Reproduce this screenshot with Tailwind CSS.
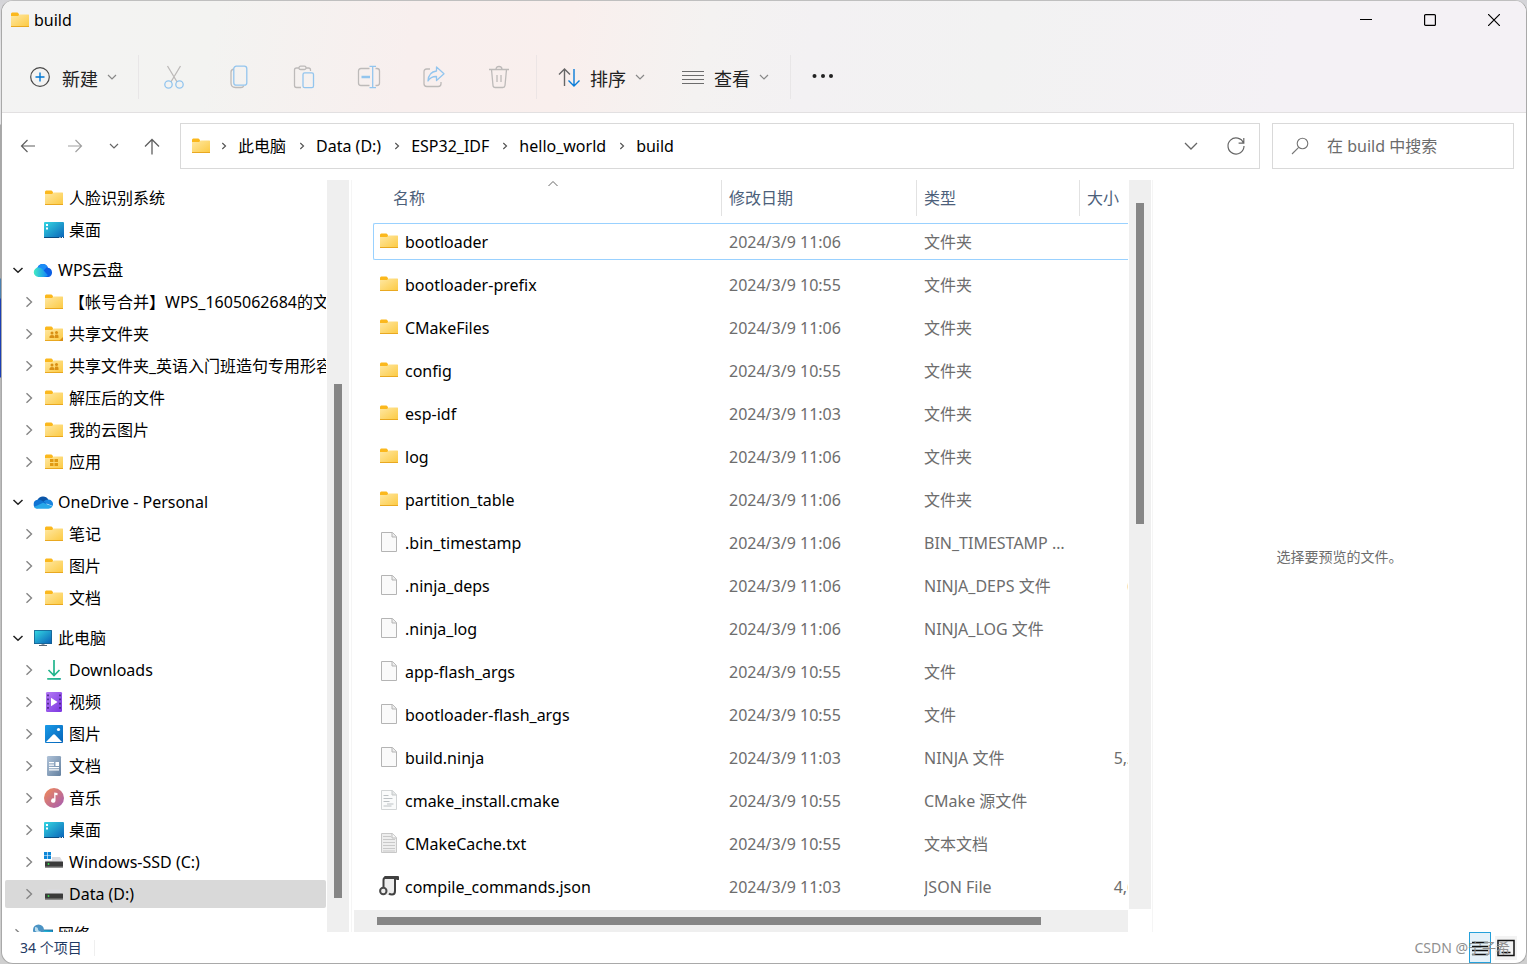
<!DOCTYPE html>
<html lang="zh-CN">
<head>
<meta charset="utf-8">
<title>build</title>
<script src="https://cdn.jsdelivr.net/npm/@tailwindcss/browser@4"></script>
</head>
<body class="h-screen overflow-hidden font-['Noto_Sans','Noto_Sans_CJK_SC',sans-serif] text-base leading-6 text-black">
<svg class="absolute size-0" aria-hidden="true" xmlns="http://www.w3.org/2000/svg">
  <defs>
    <linearGradient id="gFolder" x1="0" y1="0" x2="1" y2="1"><stop offset="0" stop-color="#ffe8a3"/><stop offset="1" stop-color="#fcca43"/></linearGradient>
    <linearGradient id="gDesk" x1="0" y1="0" x2="1" y2="1"><stop offset="0" stop-color="#33d6e2"/><stop offset="1" stop-color="#0a62b8"/></linearGradient>
    <linearGradient id="gWps" x1="0" y1="0" x2="1" y2="0"><stop offset="0" stop-color="#42ecc4"/><stop offset="1" stop-color="#1283f8"/></linearGradient>
    <linearGradient id="gDown" x1="0" y1="0" x2="1" y2="1"><stop offset="0" stop-color="#35c78c"/><stop offset="1" stop-color="#0f9c94"/></linearGradient>
    <linearGradient id="gVid" x1="0" y1="0" x2="1" y2="1"><stop offset="0" stop-color="#b57bf5"/><stop offset="1" stop-color="#7a35e0"/></linearGradient>
    <linearGradient id="gPic" x1="0" y1="0" x2="1" y2="1"><stop offset="0" stop-color="#1a9be8"/><stop offset="1" stop-color="#0563b8"/></linearGradient>
    <linearGradient id="gDoc" x1="0" y1="0" x2="1" y2="1"><stop offset="0" stop-color="#b0c3d9"/><stop offset="1" stop-color="#63809f"/></linearGradient>
    <linearGradient id="gMus" x1="0" y1="0" x2="1" y2="1"><stop offset="0" stop-color="#f38b55"/><stop offset="1" stop-color="#a35bb5"/></linearGradient>
  </defs>
  <symbol id="folder" viewBox="0 0 20 20"><path d="M1 4q0-1.500 1.200-1.500h5q.8 0 1.200.8l.6 1.200v3H1z" fill="#fbb81d"/><path d="M1 6h7l1.500-1.500H18.500q.5 0 .5.500v11.500H1z" fill="url(#gFolder)"/><path d="M1 16h18v1H1z" fill="#e9a820"/></symbol>
  <symbol id="shared" viewBox="0 0 20 20"><use href="#folder"/><g fill="#d98f14"><circle cx="8" cy="9" r="1.500"/><circle cx="12.500" cy="8.500" r="1.500"/><path d="M5.500 14v-1.500q0-1.500 2.500-1.500t2.500 1.500V14zM11 14v-3.200q3.500-.8 3.500 1.200v2z"/></g></symbol>
  <symbol id="sharedtag" viewBox="0 0 20 20"><use href="#shared"/><path d="M19 13v4h-4z" fill="#d98f14"/></symbol>
  <symbol id="apps" viewBox="0 0 20 20"><use href="#folder"/><path d="M6 7h3.500v3H6zM10.500 7h3.500v3h-3.500zM6 11h3.500v3H6zM10.500 11h3.500v3h-3.500z" fill="#e09a12"/></symbol>
  <symbol id="desktop" viewBox="0 0 20 20"><rect y="2" width="20" height="16" rx="1" fill="url(#gDesk)"/><path d="M2 4h2v2H2zM2 7.500h2v2H2z" fill="#fff"/><path d="M0 17h20v.500q0 .5-1 .5H1q-1 0-1-.5z" fill="#0a4a80"/><path d="M15.500 17h1v1h-1zM18 17h1v1h-1z" fill="#fff"/></symbol>
  <symbol id="wps" viewBox="0 0 20 20"><path d="M4.500 7.500A5.600 5.600 0 0 1 15 7.800a4.700 4.700 0 0 1 .5 9.200H9z" fill="#0b5fe4"/><path d="M4.500 7.800A5.600 5.600 0 0 1 14.500 6.500L8 13z" fill="#1a8df7"/><path d="M5.500 7.500q2.500 0 4 1.800l5.500 6q-1.500 1.700-4 1.700H5.500a4.750 4.750 0 0 1 0-9.500z" fill="url(#gWps)"/></symbol>
  <symbol id="onedrive" viewBox="0 0 20 20"><path d="M4.500 8A6 6 0 0 1 15.300 7.600L12 12z" fill="#0a55a8"/><path d="M4.500 7.700q2-.4 4 .9l6 3.400L4 16.500a4.500 4.500 0 0 1 .5-8.800z" fill="#1074d4"/><path d="M15.500 7.500a4.500 4.500 0 0 1 4 6.500l-6-2.500-3-2q2-2 5-2z" fill="#1a86e0"/><path d="M1 15l9-4.200 9.500 3.500q-1 2.400-4 2.400H4.500Q2 16.700 1 15z" fill="#28a8ea"/></symbol>
  <symbol id="pc" viewBox="0 0 20 20"><path d="M8.500 15h3v2h-3z" fill="#8a97a5"/><path d="M6 17h8v1H6z" fill="#566575"/><rect x="1" y="2" width="18" height="14" rx=".6" fill="#17608f"/><rect x="1.800" y="2.800" width="16.400" height="12.400" fill="url(#gDesk)"/></symbol>
  <symbol id="download" viewBox="0 0 20 20"><path d="M10 0v15M4.500 10l5.500 5.500 5.500-5.500" fill="none" stroke="#22b58d" stroke-width="1.700"/><rect x="3" y="18" width="14" height="1.800" rx=".8" fill="url(#gDown)"/></symbol>
  <symbol id="video" viewBox="0 0 20 20"><rect x="2" width="16" height="20" rx="1.200" fill="url(#gVid)"/><path d="M3.200 2.500h1.600v1.800H3.200zM3.200 6.500h1.600v1.800H3.200zM3.200 10.700h1.600v1.800H3.200zM3.200 15h1.600v1.800H3.200zM15.200 2.500h1.600v1.800h-1.600zM15.200 6.500h1.600v1.800h-1.600zM15.200 10.700h1.600v1.800h-1.600zM15.200 15h1.600v1.800h-1.600z" fill="#43207d"/><path d="M7 5.800l6.500 4.200L7 14.200z" fill="#fff"/></symbol>
  <symbol id="picture" viewBox="0 0 20 20"><rect x="1" y="1" width="18" height="18" rx="1" fill="url(#gPic)"/><circle cx="14.500" cy="5.500" r="1.600" fill="#fff"/><path d="M2 18l7-7.300q1-1 2 0l7 7.300z" fill="#fff"/></symbol>
  <symbol id="docs" viewBox="0 0 20 20"><rect x="3" width="14" height="20" rx="1.200" fill="url(#gDoc)"/><path d="M5 6h5v1.200H5zM5 8.600h5v1.200H5zM11.500 6H15v4h-3.500zM5 11h10v1.200H5zM5 13.300h10v1.200H5z" fill="#fff"/></symbol>
  <symbol id="music" viewBox="0 0 20 20"><circle cx="10" cy="10" r="10" fill="url(#gMus)"/><path d="M10.200 4.500l3.300.5v2.200l-2-.3v5.600a2.200 2.200 0 1 1-1.300-2z" fill="#fff"/></symbol>
  <symbol id="drive" viewBox="0 0 20 20"><path d="M4 5.500h12l3 4.500H1z" fill="#dcdce0"/><rect x="1" y="9.500" width="18" height="6" rx=".5" fill="#3b3b3b"/><path d="M1 14.500h18v1H1z" fill="#8a8a8a"/><circle cx="4.500" cy="12" r=".9" fill="#37e04d"/></symbol>
  <symbol id="windrive" viewBox="0 0 20 20"><path d="M8 5h8l3 5H1V8.500h7z" fill="#dcdce0"/><rect x="1" y="9.500" width="18" height="6" rx=".5" fill="#3b3b3b"/><path d="M1 14.500h18v1H1z" fill="#8a8a8a"/><circle cx="4.500" cy="12" r=".9" fill="#37e04d"/><path d="M0 0h3.200v3.200H0zM3.800 0H7v3.200H3.800zM0 3.800h3.200V7H0zM3.800 3.800H7V7H3.800z" fill="#0c86d8"/></symbol>
  <symbol id="network" viewBox="0 0 20 20"><rect x="6" y="6" width="14" height="10" fill="url(#gDesk)" stroke="#17608f" stroke-width=".8"/><circle cx="5.500" cy="6" r="5.500" fill="#4a93c4"/><path d="M2 3q3 0 3 2t3 2.500q-1 3-3 3-1-3-3-3.500z" fill="#b9dcee"/></symbol>
  <symbol id="file" viewBox="0 0 20 20"><path d="M2.500.500h11l4 4v15h-15z" fill="#fafafa" stroke="#b4b4b4"/><path d="M13 .500v4.500h4.500" fill="#ededed" stroke="#b4b4b4"/></symbol>
  <symbol id="cmake" viewBox="0 0 20 20"><path d="M2.500.500h11l4 4v15h-15z" fill="#fafbfb" stroke="#d2d5d6"/><path d="M13 .500v4.500h4.500" fill="#e4e6e6" stroke="#c4c8c9"/><path d="M4.500 5.500h5M4.500 8.500h9M4.500 11.500h6M8 14h6.500M4.500 16h8" stroke="#bcc1c4"/></symbol>
  <symbol id="txt" viewBox="0 0 20 20"><path d="M2.500.500h11l4 4v15h-15z" fill="#eeeeee" stroke="#c8c8c8"/><path d="M13 .500v4.500h4.500" fill="#f8f8f8" stroke="#bdbdbd"/><path d="M4 3.500h8M4 6.500h12M4 9.500h12M4 12.500h12M4 15.500h12M4 18h12" stroke="#c9c9c9"/></symbol>
  <symbol id="json" viewBox="0 0 20 20"><path d="M4 1h13v13q0 5-4 5H6z" fill="#ededed"/><path d="M4.500 12V4q0-2.500 2.500-2.500M16 3v12q0 3.500-3 3.500-2 0-3-1" fill="none" stroke="#404040" stroke-width="2"/><path d="M5.500 0H19q1 0 1 1v2.500q0 .5-.5.500h-2l-.5-1H5z" fill="#404040"/><circle cx="4.300" cy="15" r="3.200" fill="#eee" stroke="#4a4a4a" stroke-width="2"/></symbol>
  <symbol id="chev" viewBox="0 0 10 10"><path d="M1 3l4 4 4-4" fill="none" stroke="currentColor" stroke-width="1.200"/></symbol>
  <symbol id="crumb" viewBox="0 0 8 8"><path d="M2.300 1L5.500 4 2.300 7" fill="none" stroke="currentColor" stroke-width="1.200"/></symbol>
</svg>

<div class="flex h-full flex-col bg-[linear-gradient(to_bottom,#d4d4d8_0px,#e4e4e6_50px,#e4e4e6_124px,#a8a8a8_125px,#a8a8a8_278px,#4a7fb0_279px,#4a7fb0_298px,#1b3fb5_299px,#1b3fb5_377px,#b8b8b8_378px,#cfcfcf_100%)] pl-px">
<main class="flex min-h-0 flex-1 flex-col overflow-hidden rounded-xl border border-[#a9a9a9] border-t-[#bfbfbf] bg-white">

  <header class="border-b border-[#e2e0e1] bg-[linear-gradient(100deg,#f3f3f3_0%,#f3f3f1_14%,#f8efee_27%,#f9efed_37%,#f4f2f1_46%,#f3f1f3_53%,#f2f2f2_65%,#f4f1f5_84%,#f4f1f5_100%)]">
    <div class="flex h-[38px] items-center">
      <svg class="ml-2 size-5"><use href="#folder"/></svg>
      <h1 class="ml-1 flex-1">build</h1>
      <button type="button" aria-label="最小化" class="flex h-full w-16 items-center justify-center"><svg class="size-3" viewBox="0 0 12 12"><path d="M0 5.500h12" stroke="#000"/></svg></button>
      <button type="button" aria-label="最大化" class="flex h-full w-16 items-center justify-center"><svg class="size-3" viewBox="0 0 12 12"><rect x=".6" y=".6" width="10.800" height="10.800" rx="1" fill="none" stroke="#000" stroke-width="1.200"/></svg></button>
      <button type="button" aria-label="关闭" class="flex h-full w-16 items-center justify-center"><svg class="size-3" viewBox="0 0 12 12"><path d="M0 0l12 12M12 0L0 12" stroke="#000" stroke-width="1.200"/></svg></button>
    </div>
    <div class="flex h-[73px] items-center pt-0.5 text-lg text-[#222]">
      <button type="button" class="flex items-center pl-7">
        <svg class="size-5" viewBox="0 0 20 20" fill="none"><circle cx="10" cy="10" r="9.300" stroke="#4a4a4a" stroke-width="1.200"/><path d="M10 5.500v9M5.500 10h9" stroke="#0078d4" stroke-width="1.400"/></svg>
        <span class="ml-3 pt-1">新建</span><svg class="ml-[9px] size-2.5 text-[#888]"><use href="#chev"/></svg>
      </button>
      <div class="ml-[21px] h-11 w-px bg-[#e8e6e7]"></div>
      <button type="button" disabled aria-label="剪切" class="ml-0.5 flex w-[65px] justify-center"><svg class="size-6" viewBox="0 0 24 24" fill="none" stroke-width="1.300"><path d="M5.500 1l9.600 16M18.500 1L8.900 17" stroke="#bdbab9"/><circle cx="6.500" cy="19.500" r="3.700" stroke="#93c5ee"/><circle cx="17.500" cy="19.500" r="3.700" stroke="#93c5ee"/></svg></button>
      <button type="button" disabled aria-label="复制" class="flex w-[65px] justify-center"><svg class="size-6" viewBox="0 0 24 24" fill="none" stroke-width="1.300"><path d="M7 4Q4 4.500 4 7v11q0 4.500 4.500 4.500H14q2 0 2.800-1.800" stroke="#bdbab9"/><rect x="6.800" y="1.200" width="13" height="19" rx="2.500" stroke="#93c5ee"/></svg></button>
      <button type="button" disabled aria-label="粘贴" class="flex w-[65px] justify-center"><svg class="size-6" viewBox="0 0 24 24" fill="none" stroke-width="1.300"><path d="M7 3H4.500Q2.500 3 2.500 5v15.500q0 2 2 2H9M14 3h2.500q2 0 2 2v1" stroke="#bdbab9"/><rect x="7" y="1.200" width="7" height="3.300" rx="1.600" stroke="#bdbab9"/><rect x="11" y="7.800" width="10.500" height="14.800" rx="1.600" stroke="#93c5ee"/></svg></button>
      <button type="button" disabled aria-label="重命名" class="flex w-[65px] justify-center"><svg class="size-6" viewBox="0 0 24 24" fill="none" stroke-width="1.300"><path d="M12.500 3.500H4Q1.500 3.500 1.500 6v12q0 2.500 2.500 2.500h8.500M18.500 3.500h1.500q2.500 0 2.500 2.500v12q0 2.500-2.500 2.500h-1.500" stroke="#bdbab9"/><path d="M12.500 1.300h6.500M12.500 22.700h6.500M15.700 1.300v21.400" stroke="#93c5ee"/><path d="M4.500 12H13" stroke="#93c5ee" stroke-width="2.500"/></svg></button>
      <button type="button" disabled aria-label="共享" class="flex w-[65px] justify-center"><svg class="size-6" viewBox="0 0 24 24" fill="none" stroke-width="1.300"><path d="M8 4H4.800Q2 4 2 6.800v12Q2 21.500 4.800 21.500h11.400q2.800 0 2.800-2.700V17" stroke="#bdbab9"/><path d="M14.500 2l7.500 6.800-7.500 6.700v-4q-5.500-.3-8.500 4.500.5-9 8.500-10z" stroke="#93c5ee" stroke-linejoin="round"/></svg></button>
      <button type="button" disabled aria-label="删除" class="flex w-[65px] justify-center"><svg class="size-6" viewBox="0 0 24 24" fill="none" stroke="#bdbab9" stroke-width="1.300"><path d="M2 4.500h20M4.500 4.500L6 20.500q.2 2 2.200 2h7.600q2 0 2.200-2l1.500-16M9 4.500Q9 1.500 12 1.500t3 3M10 10v7M14 10v7"/></svg></button>
      <div class="ml-[5px] h-11 w-px bg-[#ece5e5]"></div>
      <button type="button" class="ml-5 flex items-center">
        <svg class="size-6" viewBox="0 0 24 24" fill="none" stroke-width="1.400"><path d="M7.500 21V4M2 9.500L7.500 4l5.500 5.500" stroke="#666"/><path d="M17 4v17M11.500 15.500L17 21l5.500-5.500" stroke="#0a7cd8"/></svg>
        <span class="ml-[9px] pt-1">排序</span><svg class="ml-[9px] size-2.5 text-[#888]"><use href="#chev"/></svg>
      </button>
      <button type="button" class="ml-9 flex items-center">
        <svg class="size-6" viewBox="0 0 24 24" fill="none" stroke="#6c6c6c" stroke-width="1.200"><path d="M1 6.500h22M1 10.500h22M1 14.500h22M1 18.500h22"/></svg>
        <span class="ml-[9px] pt-1">查看</span><svg class="ml-[9px] size-2.5 text-[#888]"><use href="#chev"/></svg>
      </button>
      <div class="ml-[21px] h-11 w-px bg-[#e8e6e7]"></div>
      <button type="button" aria-label="更多" class="ml-5 flex pb-0.5"><svg class="h-4 w-6" viewBox="0 0 24 16" fill="#222"><circle cx="3.500" cy="8" r="2"/><circle cx="12" cy="8" r="2"/><circle cx="20" cy="8" r="2"/></svg></button>
    </div>
  </header>

  <nav aria-label="地址" class="flex h-[67px] items-center pr-3 pb-px">
    <button type="button" aria-label="后退" class="ml-4 flex w-5 justify-center"><svg class="size-4" viewBox="0 0 16 16" fill="none" stroke="#5f5f5f" stroke-width="1.200"><path d="M15 8H1.500M7.500 2L1.500 8l6 6"/></svg></button>
    <button type="button" aria-label="前进" class="ml-[27px] flex w-5 justify-center"><svg class="size-4" viewBox="0 0 16 16" fill="none" stroke="#a0a0a0" stroke-width="1.200"><path d="M1 8h13.500M8.500 2l6 6-6 6"/></svg></button>
    <button type="button" aria-label="最近位置" class="ml-[19px] flex w-5 justify-center"><svg class="size-2.5 text-[#666]"><use href="#chev"/></svg></button>
    <button type="button" aria-label="向上" class="ml-[18px] flex w-5 justify-center"><svg class="h-[17px] w-4" viewBox="0 0 16 17" fill="none" stroke="#5f5f5f" stroke-width="1.300"><path d="M8 16.500V1.500M1 8.500l7-7 7 7"/></svg></button>
    <div class="ml-[18px] flex h-[46px] min-w-0 flex-1 items-center border border-[#d9d9d9] pl-2.5">
      <svg class="size-5 shrink-0"><use href="#folder"/></svg>
      <ol id="crumbs" class="flex flex-1 items-center gap-[3px]"></ol>
      <button type="button" aria-label="历史记录" class="flex w-8 justify-center"><svg class="size-4" viewBox="0 0 16 16"><path d="M2 5l6 6 6-6" fill="none" stroke="#666" stroke-width="1.300"/></svg></button>
      <button type="button" aria-label="刷新" class="mr-[11px] ml-[17px] flex w-6 justify-center"><svg class="size-5" viewBox="0 0 20 20" fill="none" stroke="#666" stroke-width="1.200"><path d="M17.500 7.200A8 8 0 1 0 18 10M17.800 2v5.200h-5.200"/></svg></button>
    </div>
    <label class="ml-3 flex h-[46px] w-[242px] items-center border border-[#d9d9d9] pl-[18px]">
      <svg class="size-[18px] shrink-0" viewBox="0 0 18 18" fill="none" stroke="#777" stroke-width="1.100"><circle cx="11.500" cy="6.500" r="5.300"/><path d="M7.700 10.300L1 17"/></svg>
      <input type="search" aria-label="搜索" placeholder="在 build 中搜索" class="ml-[18px] w-full min-w-0 placeholder:text-[#6b6b6b] outline-none">
    </label>
  </nav>

  <div class="flex min-h-0 flex-1">
    <aside class="flex w-[347px] shrink-0">
      <ul id="tree" class="w-[324px] overflow-hidden pt-0.5 pl-[3px]"></ul>
      <div class="ml-px w-[22px] bg-[#efefef] pt-[204px]"><div class="mx-auto h-[514px] w-2 bg-[#868686]"></div></div>
    </aside>

    <section class="ml-0.5 flex min-w-0 flex-1 flex-col border-l border-[#f5f5f5] pl-0.5">
      <div class="flex min-h-0 flex-1">
        <div class="min-w-0 flex-1 overflow-hidden pl-[19px]">
          <table class="w-[810px] table-fixed border-separate border-spacing-0 text-left">
            <colgroup><col class="w-[349px]"><col class="w-[195px]"><col class="w-[163px]"><col></colgroup>
            <thead class="text-[#4c607a]">
              <tr>
                <th scope="col" class="relative pb-1 font-normal"><div class="flex h-9 items-center border-r border-[#e2e2e2] pl-5">名称</div>
                  <svg class="absolute top-0 left-[175px] h-2 w-2.5" viewBox="0 0 10 8"><path d="M.5 6L5 1.500 9.500 6" fill="none" stroke="#666"/></svg></th>
                <th scope="col" class="pb-1 font-normal"><div class="flex h-9 items-center border-r border-[#e2e2e2] pl-[7px]">修改日期</div></th>
                <th scope="col" class="pb-1 font-normal"><div class="flex h-9 items-center border-r border-[#e2e2e2] pl-[7px]">类型</div></th>
                <th scope="col" class="pb-1 font-normal"><div class="flex h-9 items-center pl-[7px]">大小</div></th>
              </tr>
            </thead>
            <tbody id="files" class="text-[#6d6d6d]"></tbody>
          </table>
        </div>
        <div class="ml-px w-[22px] bg-[#efefef] pt-[23px]"><div class="mx-auto h-[321px] w-2 bg-[#868686]"></div></div>
      </div>
      <div class="mt-px mr-[23px] flex h-[22px] items-center bg-[#efefef] pl-[23px]"><div class="h-2 w-[664px] bg-[#868686]"></div></div>
    </section>

    <section class="ml-px flex w-[374px] shrink-0 items-center justify-center border-l border-[#f5f5f5] pt-0.5 text-sm text-[#6d6d6d]">
      <p>选择要预览的文件。</p>
    </section>
  </div>

  <footer class="relative flex h-[31px] items-center pl-[18px] text-sm text-[#1f3a63]">
    <span>34 个项目</span>
    <div class="ml-3 h-4 w-px bg-[#efefef]"></div>
    <div class="ml-auto flex h-full items-center pr-[9px]">
      <button type="button" aria-label="详细信息" class="flex h-full w-[22px] items-center justify-center border border-[#26a0da] bg-[#e5f1f9]"><svg class="size-4" viewBox="0 0 16 16" stroke="#111" stroke-width="1.500"><path d="M0 2.500h16M0 6.500h16M0 10.500h16M0 14.500h16"/></svg></button>
      <button type="button" aria-label="大图标" class="ml-1 flex h-6 w-[22px] items-center justify-center bg-[#f3f3f3]"><svg class="size-[18px]" viewBox="0 0 18 18" fill="none" stroke="#111" stroke-width="1.500"><rect x="1" y="1.500" width="16" height="15"/><path d="M4.500 13.500h9" stroke-width="1.500"/></svg></button>
    </div>
    <span class="pointer-events-none absolute right-4 text-[#909090]">CSDN @宁子希</span>
  </footer>
</main>
</div>

<script>
  const crumbs = ['此电脑', 'Data (D:)', 'ESP32_IDF', 'hello_world', 'build'];
  document.getElementById('crumbs').innerHTML = crumbs.map(c =>
    `<li class="flex items-center"><svg class="mr-2.5 ml-[9px] size-2 text-[#555]"><use href="#crumb"/></svg><a href="#" class="whitespace-nowrap">${c}</a></li>`).join('');

  // [level, icon, label, state]
  const tree = [
    [1, 'folder', '人脸识别系统', 'leaf'], [1, 'desktop', '桌面', 'leaf'],
    [0, 'wps', 'WPS云盘'],
    [1, 'folder', '【帐号合并】WPS_1605062684的文件'], [1, 'sharedtag', '共享文件夹'], [1, 'shared', '共享文件夹_英语入门班造句专用形容词'],
    [1, 'folder', '解压后的文件'], [1, 'folder', '我的云图片'], [1, 'apps', '应用'],
    [0, 'onedrive', 'OneDrive - Personal'],
    [1, 'folder', '笔记'], [1, 'folder', '图片'], [1, 'folder', '文档'],
    [0, 'pc', '此电脑'],
    [1, 'download', 'Downloads'], [1, 'video', '视频'], [1, 'picture', '图片'], [1, 'docs', '文档'],
    [1, 'music', '音乐'], [1, 'desktop', '桌面'], [1, 'windrive', 'Windows-SSD (C:)'], [1, 'drive', 'Data (D:)', 'sel'],
    [0, 'network', '网络', 'closed'],
  ];
  const open = '<svg class="size-3 shrink-0" viewBox="0 0 12 12"><path d="M1.500 4L6 8.300 10.500 4" fill="none" stroke="#222" stroke-width="1.500"/></svg>';
  const closed = '<svg class="size-3 shrink-0" viewBox="0 0 12 12"><path d="M3.500 1.200L8.500 6l-5 4.800" fill="none" stroke="#858585" stroke-width="1.400"/></svg>';
  document.getElementById('tree').innerHTML = tree.map(([lv, icon, label, st]) => {
    const arrow = st === 'leaf' ? '<span class="size-3 shrink-0"></span>' : (lv || st === 'closed') ? closed : open;
    return `<li class="${lv ? 'py-0.5' : 'pt-2.5 pb-0.5'}"><button type="button" class="flex h-7 w-full items-center overflow-hidden whitespace-nowrap rounded-xs ${lv ? 'pl-[18px]' : 'pl-[7px]'} ${st === 'sel' ? 'bg-[#d9d9d9]' : ''}">${arrow}<svg class="ml-[9px] size-5 shrink-0"><use href="#${icon}"/></svg><span class="ml-[5px]">${label}</span></button></li>`;
  }).join('');

  const files = [
    ['folder', 'bootloader', '11:06', '文件夹', ''], ['folder', 'bootloader-prefix', '10:55', '文件夹', ''],
    ['folder', 'CMakeFiles', '11:06', '文件夹', ''], ['folder', 'config', '10:55', '文件夹', ''],
    ['folder', 'esp-idf', '11:03', '文件夹', ''], ['folder', 'log', '11:06', '文件夹', ''],
    ['folder', 'partition_table', '11:06', '文件夹', ''],
    ['file', '.bin_timestamp', '11:06', 'BIN_TIMESTAMP 文件', '0 KB'], ['file', '.ninja_deps', '11:06', 'NINJA_DEPS 文件', '606 KB'],
    ['file', '.ninja_log', '11:06', 'NINJA_LOG 文件', '116 KB'], ['file', 'app-flash_args', '10:55', '文件', '1 KB'],
    ['file', 'bootloader-flash_args', '10:55', '文件', '1 KB'], ['file', 'build.ninja', '11:03', 'NINJA 文件', '5,232 KB'],
    ['cmake', 'cmake_install.cmake', '10:55', 'CMake 源文件', '6 KB'], ['txt', 'CMakeCache.txt', '10:55', '文本文档', '28 KB'],
    ['json', 'compile_commands.json', '11:03', 'JSON File', '4,608 KB'],
  ];
  document.getElementById('files').innerHTML = files.map(([icon, name, time, type, size], i) => {
    const line = i ? 'border-transparent' : 'border-[#99d1ff]';
    return `<tr>
      <td class="py-[3px]"><div class="flex h-[37px] items-center border-y border-l rounded-l-xs pl-[5px] text-black ${line}"><svg class="mb-0.5 size-5 shrink-0"><use href="#${icon}"/></svg><span class="ml-1.5">${name}</span></div></td>
      <td class="py-[3px]"><div class="flex h-[37px] items-center border-y pl-[7px] ${line}">2024/3/9 ${time}</div></td>
      <td class="py-[3px]"><div class="flex h-[37px] items-center border-y pr-1 pl-[7px] ${line}"><span class="truncate">${type}</span></div></td>
      <td class="py-[3px]"><div class="flex h-[37px] items-center justify-end border-y pr-1 ${line}">${size}</div></td></tr>`;
  }).join('');
</script>
</body>
</html>
